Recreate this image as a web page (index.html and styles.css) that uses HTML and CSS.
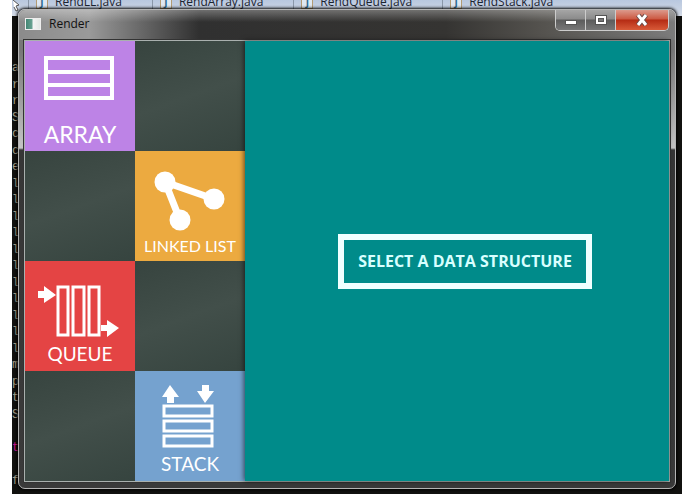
FILE: index.html
```
<!DOCTYPE html>
<html lang="en">
<head>
<meta charset="UTF-8">
<meta name="viewport" content="width=device-width, initial-scale=1.0">
<title>Render</title>
<link rel="stylesheet" href="styles.css">
</head>
<body>

<div class="desktop">
  <div class="tabs">
    <svg class="cursor" viewBox="0 0 12 12" width="12" height="12"><path d="M1 0 L7 5 L4 6 L6 10 L4 11 L2 7" fill="#fff" stroke="#555"/></svg>
    <span class="tab"><i class="file-icon">J</i>RendLL.java</span>
    <span class="tab"><i class="file-icon">J</i>RendArray.java</span>
    <span class="tab"><i class="file-icon">J</i>RendQueue.java</span>
    <span class="tab"><i class="file-icon">J</i>RendStack.java</span>
  </div>
  <div class="code">
    <span>a</span><span>r</span><span>r</span><span>S</span><span>c</span><span>c</span><span>e</span>
    <span>l</span><span>l</span><span>l</span><span>l</span><span>l</span><span>l</span><span>l</span><span>l</span><span>l</span><span>l</span><span>l</span>
    <span>m</span><span>p</span><span>t</span><span>S</span><span>&nbsp;</span><span class="keyword">t</span><span>&nbsp;</span><span>f</span>
  </div>

  <div class="window">
    <div class="titlebar">
      <span class="app-icon"></span>
      <span class="title">Render</span>
      <div class="controls">
        <button class="minimize" aria-label="Minimize">
          <svg viewBox="0 0 14 12" width="14" height="12"><rect x="1.5" y="6.5" width="11" height="4" fill="#fff" stroke="#555"/></svg>
        </button>
        <button class="maximize" aria-label="Maximize">
          <svg viewBox="0 0 14 12" width="14" height="12"><rect x="1.5" y="1.5" width="11" height="9" fill="#fff" stroke="#555"/><rect x="4.5" y="4.5" width="5" height="3" fill="#777" stroke="#555"/></svg>
        </button>
        <button class="close" aria-label="Close">
          <svg viewBox="0 0 14 12" width="14" height="12"><path d="M3 1 L11 11 M11 1 L3 11" stroke="#6b4a46" stroke-width="5"/><path d="M3 1 L11 11 M11 1 L3 11" stroke="#fff" stroke-width="3"/></svg>
        </button>
      </div>
    </div>

    <div class="content">
      <div class="menu">
        <button class="tile array">
          <svg viewBox="0 0 110 80" fill="none" stroke="#fff" stroke-width="4">
            <path d="M21 17 H87 V57 H21 Z M21 31 H87 M21 44 H87"/>
          </svg>
          <span>ARRAY</span>
        </button>
        <div class="board"></div>
        <div class="board"></div>
        <button class="tile linked-list">
          <svg viewBox="0 0 110 80" fill="#fff">
            <path d="M79 48 L30 31 L45 69" fill="none" stroke="#fff" stroke-width="7"/>
            <circle cx="30" cy="31" r="10.5"/>
            <circle cx="79" cy="48" r="10.5"/>
            <circle cx="45" cy="69" r="10.5"/>
          </svg>
          <span>LINKED LIST</span>
        </button>
        <button class="tile queue">
          <svg viewBox="0 0 110 80" fill="#fff">
            <path d="M33 26 H43 V74 H33 Z M48 26 H59 V74 H48 Z M64 26 H74 V74 H64 Z" fill="none" stroke="#fff" stroke-width="3"/>
            <path d="M13 30 H19 V25 L31 34 L19 42 V37 H13 Z"/>
            <path d="M76 64 H82 V59 L94 67 L82 76 V70 H76 Z"/>
          </svg>
          <span>QUEUE</span>
        </button>
        <div class="board"></div>
        <div class="board"></div>
        <button class="tile stack">
          <svg viewBox="0 0 110 80" fill="#fff">
            <path d="M29 35 H77 V45 H29 Z M29 50 H77 V60 H29 Z M29 65 H77 V75 H29 Z" fill="none" stroke="#fff" stroke-width="3"/>
            <path d="M35 14 L44 26 H39 V32 H32 V26 H27 Z"/>
            <path d="M70 32 L79 20 H74 V14 H67 V20 H62 Z"/>
          </svg>
          <span>STACK</span>
        </button>
      </div>
      <div class="canvas">
        <div class="message">SELECT A DATA STRUCTURE</div>
      </div>
    </div>
  </div>
</div>

</body>
</html>
```
FILE: styles.css
```
* {
  box-sizing: border-box;
}
body {
  margin: 0;
  padding: 0 13px 0 12px;
  background: #fff;
  font-family: "Open Sans", "Noto Sans", sans-serif;
}
.desktop {
  position: relative;
  display: flex;
  flex-direction: column;
  height: 100vh;
  background: #11110f;
  overflow: hidden;
}
.tabs {
  display: flex;
  flex: none;
  height: 16px;
  background: linear-gradient(#b9c8df, #d3dae6);
}
.cursor {
  margin-right: 4px;
}
.tab {
  display: flex;
  height: 10px;
  padding: 0 30px 0 7px;
  border-left: 1px solid #8a97a8;
  font-size: 12px;
  line-height: 4px;
  color: #1c2430;
}
.file-icon {
  width: 12px;
  height: 9px;
  margin-right: 7px;
  border: 1px solid #b39b74;
  border-top: 0;
  background: #dfe8f2;
  font-style: normal;
  font-weight: bold;
  font-size: 10px;
  text-align: center;
  color: #2c6a94;
}
.code {
  display: flex;
  flex: 1;
  flex-direction: column;
  justify-content: space-between;
  padding: 45px 0 6px;
  font-family: "Liberation Mono", monospace;
  font-size: 12px;
  line-height: 14px;
  color: #a8a18c;
}
.keyword {
  color: #d0148c;
}

/* window frame */
.window {
  position: absolute;
  top: 9px;
  right: 6px;
  bottom: 5px;
  left: 6px;
  display: flex;
  flex-direction: column;
  padding: 0 5px 6px;
  border: 1px solid #b4b4b4;
  border-radius: 7px;
  background: linear-gradient(#777 0, #777 40px, #c4c4c4 138px, #363636 140px, #3a3a3a 100%);
  box-shadow: 0 0 3px 1px #000;
}
.titlebar {
  display: flex;
  flex: none;
  height: 30px;
  margin: 0 -5px;
  padding-left: 5px;
  border-radius: 6px 6px 0 0;
  background:
    linear-gradient(rgba(255, 255, 255, 0.3), rgba(255, 255, 255, 0) 12px),
    linear-gradient(90deg, #8b8b8b 0, #9a9a9a 70px, #303030 180px, #353432 65%, #55534f 80%, #7c7c7c 100%);
}
.app-icon {
  width: 16px;
  height: 12px;
  margin: 8px 8px 0 1px;
  border: 1px solid #eee;
  background: linear-gradient(90deg, #438573 0, #69a392 6px, #f5f5f5 7px, #e2e8e4 100%);
}
.title {
  font-size: 12px;
  line-height: 28px;
  color: #111;
}
.controls {
  display: flex;
  height: 21px;
  margin-left: auto;
  margin-right: 6px;
  border: 1px solid #ccc;
  border-top: 0;
  border-radius: 0 0 5px 5px;
  overflow: hidden;
}
.controls button {
  display: flex;
  align-items: center;
  justify-content: center;
  width: 30px;
  padding: 0;
  border: 0;
  border-right: 1px solid #ccc;
  background: linear-gradient(#a5a5a5, #8b8b8b 45%, #5c5c5c 50%, #777);
}
.controls .close {
  width: 52px;
  border-right: 0;
  background: linear-gradient(#dc9a8c, #cc5942 45%, #b52b14 50%, #d85a38);
}

/* client area */
.content {
  display: flex;
  flex: 1;
  border: 1px solid #a9b0ae;
  box-shadow: 0 0 0 1px #333;
}
.menu {
  display: grid;
  flex: none;
  grid-template-columns: 110px 110px;
  grid-template-rows: repeat(4, 1fr);
  background: #3b4844;
}
.board {
  background: linear-gradient(160deg, #37443f, #424f4a 50%, #36443f);
}
.tile {
  display: flex;
  flex-direction: column;
  align-items: center;
  padding: 0;
  border: 0;
  font-family: Lato, sans-serif;
  font-size: 19px;
  line-height: 26px;
  color: #fff;
  cursor: pointer;
}
.tile svg {
  flex: none;
  width: 110px;
  height: 80px;
}
.array {
  background: #bd83e6;
  font-size: 23px;
}
.linked-list {
  background: #ecaa40;
  font-size: 16px;
  line-height: 30px;
}
.queue {
  background: #e44444;
}
.stack {
  background: #75a2cf;
}
.canvas {
  display: flex;
  flex: 1;
  align-items: center;
  justify-content: center;
  padding-left: 16px;
  background: #008b8a;
  box-shadow: -1px 0 5px rgba(0, 0, 0, 0.6);
}
.message {
  padding: 12px 14px;
  border: 6px solid #f0ffff;
  font-size: 16px;
  font-weight: bold;
  line-height: 19px;
  color: #d8ffff;
}
```
